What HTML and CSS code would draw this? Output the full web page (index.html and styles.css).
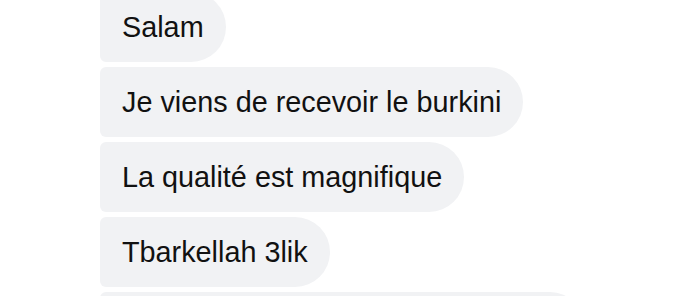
FILE: index.html
```html
<!DOCTYPE html>
<html lang="fr">
<head>
    <meta charset="UTF-8">
    <title>Messages</title>
    <link rel="stylesheet" href="styles.css">
</head>
<body>
    <div class="thread">
        <div class="bubble">Salam</div>
        <div class="bubble">Je viens de recevoir le burkini</div>
        <div class="bubble">La qualité est magnifique</div>
        <div class="bubble">Tbarkellah 3lik</div>
        <div class="bubble next"></div>
    </div>
</body>
</html>
```
FILE: styles.css
```css
*{margin:0;padding:0;box-sizing:border-box;}
body{
    background-color: #fff;
    font-family: "Liberation Sans", Arial, sans-serif;
    overflow: hidden;
}
.thread{
    display: flex;
    flex-direction: column;
    align-items: flex-start;
    gap: 5px;
    margin-top: -8px;
    padding-left: 100px;
}
.bubble{
    height: 70px;
    padding: 0 22px;
    background-color: #f1f2f4;
    border-radius: 6px 35px 35px 6px;
    font-size: 28.8px;
    line-height: 70px;
    color: #111;
    white-space: nowrap;
}
.next{
    width: 485px;
}
```
